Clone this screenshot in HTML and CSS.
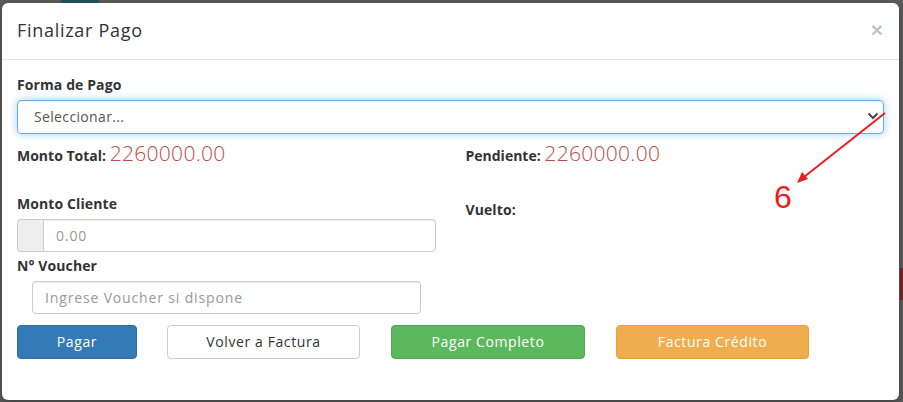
FILE: index.html
```html
<!DOCTYPE html>
<html lang="es">
<head>
<meta charset="utf-8">
<title>Finalizar Pago</title>
<link rel="stylesheet" href="styles.css">
</head>
<body>
<div class="underlay">
  <span class="under-tab"></span>
  <span class="under-red"></span>
</div>
<div class="page">
  <div class="modal">
    <div class="modal-header">
      <h4 class="modal-title">Finalizar Pago</h4>
      <span class="close">×</span>
    </div>
    <div class="modal-body">
      <div class="form-group">
        <label class="label">Forma de Pago</label>
        <div class="select">
          <span class="select-text">Seleccionar...</span>
          <svg class="chev" width="12" height="8" viewBox="0 0 12 8"><path d="M1.5 1.5 L6 6 L10.5 1.5" fill="none" stroke="#444" stroke-width="2"/></svg>
        </div>
      </div>
      <div class="row">
        <div class="col">
          <div class="amount"><span class="amount-label">Monto Total:</span> <span class="amount-value">2260000.00</span></div>
          <label class="label label-cliente">Monto Cliente</label>
          <div class="input-group">
            <span class="addon"></span>
            <input class="input input-grouped" type="text" placeholder="0.00">
          </div>
          <label class="label label-voucher">N° Voucher</label>
          <div class="nested">
            <input class="input" type="text" placeholder="Ingrese Voucher si dispone">
          </div>
        </div>
        <div class="col">
          <div class="amount"><span class="amount-label">Pendiente:</span> <span class="amount-value">2260000.00</span></div>
          <label class="label label-vuelto">Vuelto:</label>
        </div>
      </div>
      <div class="actions">
        <button class="btn btn-primary btn-pagar">Pagar</button>
        <button class="btn btn-default btn-wide">Volver a Factura</button>
        <button class="btn btn-success btn-wide">Pagar Completo</button>
        <button class="btn btn-warning btn-wide">Factura Crédito</button>
      </div>
    </div>
  </div>
</div>
<svg class="annotation" width="903" height="402" viewBox="0 0 903 402">
  <line x1="885" y1="113" x2="804" y2="177" stroke="#ee1c1c" stroke-width="2"/>
  <path d="M797 183 L802 172 L808 179 Z" fill="#ee1c1c"/>
  <text x="774" y="208" class="anno-text">6</text>
</svg>
</body>
</html>
```
FILE: styles.css
```css
* { box-sizing: border-box; }
html, body { margin: 0; padding: 0; }
body {
  width: 903px;
  height: 402px;
  background: #5b5b5b;
  font-family: "Open Sans", "Liberation Sans", sans-serif;
  font-size: 14px;
  color: #333;
  position: relative;
  overflow: hidden;
}
.underlay { position: absolute; inset: 0; }
.under-tab { position: absolute; left: 61px; top: 0; width: 38px; height: 3px; background: #23535c; }
.under-red { position: absolute; right: 0; top: 268px; width: 3px; height: 32px; background: #7c2424; }
.page {
  position: relative;
  padding: 3px 4px 2px 2px;
  height: 402px;
}
.modal {
  background: #fff;
  border-radius: 6px;
  height: 100%;
  box-shadow: 0 3px 9px rgba(0,0,0,.3);
}
.modal-header {
  display: flex;
  align-items: flex-start;
  justify-content: space-between;
  padding: 15px 16px 15px 15px;
  border-bottom: 1px solid #e5e5e5;
}
.modal-title {
  margin: 0;
  font-size: 18px;
  font-weight: 400;
  line-height: 25.7px;
  letter-spacing: 0.7px;
  color: #333;
}
.close {
  font-size: 21px;
  font-weight: 700;
  line-height: 1;
  color: #c4c4c4;
  font-family: "Liberation Sans", sans-serif;
  margin-top: 1px;
}
.modal-body { padding: 15px; }
.label {
  display: block;
  font-weight: 700;
  line-height: 20px;
  margin-bottom: 5px;
  letter-spacing: 0.1px;
}
.form-group { margin-bottom: 5px; }
.select {
  height: 34px;
  border: 1px solid #66afe9;
  border-radius: 4px;
  box-shadow: inset 0 1px 1px rgba(0,0,0,.075), 0 0 8px rgba(102,175,233,.6);
  display: flex;
  align-items: center;
  justify-content: space-between;
  padding: 0 4px 0 16px;
  color: #555;
}
.select-text { letter-spacing: 0.35px; }
.chev { margin-top: -2px; }
.row { display: flex; margin: 0 -15px; }
.col { width: 50%; padding: 0 15px; }
.amount { line-height: 28px; height: 28px; white-space: nowrap; }
.amount-label { font-weight: 700; font-size: 14px; }
.amount-value { font-size: 21px; color: #b94a48; font-weight: 300; letter-spacing: 0.3px; }
.label-cliente { margin-top: 27px; }
.label-vuelto { margin-top: 33px; }
.label-voucher { margin-top: 4px; }
.input-group { display: flex; height: 33px; }
.addon {
  width: 26px;
  background: #eee;
  border: 1px solid #ccc;
  border-right: 0;
  border-radius: 4px 0 0 4px;
}
.input {
  display: block;
  width: 100%;
  height: 33px;
  border: 1px solid #ccc;
  border-radius: 4px;
  padding: 6px 12px;
  font: inherit;
  letter-spacing: 0.85px;
  color: #555;
  box-shadow: inset 0 1px 1px rgba(0,0,0,.075);
}
.input::placeholder { color: #999; }
.input-grouped { flex: 1; border-radius: 0 4px 4px 0; }
.nested { padding: 0 15px; }
.actions { display: flex; margin-top: 11px; }
.btn {
  height: 34px;
  border-radius: 4px;
  border: 1px solid transparent;
  font: inherit;
  font-size: 14px;
  letter-spacing: 0.6px;
  color: #fff;
  padding: 0;
  margin-right: 31px;
}
.btn-pagar { width: 120px; margin-right: 30px; }
.btn-wide { width: 194px; }
.btn-primary { background: #337ab7; border-color: #2e6da4; }
.btn-default { background: #fff; border-color: #ccc; color: #333; width: 193px; }
.btn-success { background: #5cb85c; border-color: #4cae4c; }
.btn-warning { background: #f0ad4e; border-color: #eea236; width: 193px; }
.annotation { position: absolute; left: 0; top: 0; pointer-events: none; }
.anno-text { font-family: "Liberation Sans", sans-serif; font-size: 32px; fill: #ee1c1c; }
```
